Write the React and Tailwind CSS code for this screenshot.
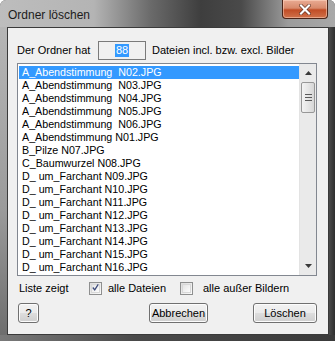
import React from 'react'

const files = [
  'A_Abendstimmung  N02.JPG',
  'A_Abendstimmung  N03.JPG',
  'A_Abendstimmung  N04.JPG',
  'A_Abendstimmung  N05.JPG',
  'A_Abendstimmung  N06.JPG',
  'A_Abendstimmung N01.JPG',
  'B_Pilze N07.JPG',
  'C_Baumwurzel N08.JPG',
  'D_ um_Farchant N09.JPG',
  'D_ um_Farchant N10.JPG',
  'D_ um_Farchant N11.JPG',
  'D_ um_Farchant N12.JPG',
  'D_ um_Farchant N13.JPG',
  'D_ um_Farchant N14.JPG',
  'D_ um_Farchant N15.JPG',
  'D_ um_Farchant N16.JPG',
]

const Checkbox = ({ checked }) => (
  <span className="w-[13px] h-[13px] border border-[#8e8f8f] bg-[linear-gradient(135deg,#dcdcdc,#fbfbfb)] flex items-center justify-center">
    <span className="w-[9px] h-[9px] border border-[#d8d8d8] bg-[linear-gradient(135deg,#e4e4e4,#fdfdfd)] flex items-center justify-center">
      {checked && (
        <svg width="9" height="9" viewBox="0 0 9 9" className="-mt-[1px]">
          <path d="M1 4.5 L3.5 7.5 L8 0.5" fill="none" stroke="#3c4a7a" strokeWidth="1.6" />
        </svg>
      )}
    </span>
  </span>
)

const Button = ({ children, className = '' }) => (
  <button className={`h-[20px] rounded-[3px] border border-[#707070] bg-[linear-gradient(#f2f2f2_0%,#ebebeb_48%,#dddddd_52%,#cfcfcf_100%)] shadow-[inset_0_0_0_1px_#fcfcfc] text-[11px] text-black flex items-center justify-center ${className}`}>
    {children}
  </button>
)

export default function App() {
  return (
    <div className="w-[335px] h-[341px] flex flex-col rounded-t-[6px] overflow-hidden bg-[#5a5a5a] font-['Liberation_Sans',Arial,sans-serif]">
      {/* TITLE BAR */}
      <div className="h-[27px] flex items-start justify-between pl-[8px] pr-[7px] bg-[linear-gradient(90deg,#bdbdbd_0%,#b4b4b4_28%,#6a6a6a_45%,#3e3e3e_60%,#4a4a4a_72%,#9c9c9c_86%,#a8a8a8_100%)]">
        <span className="mt-[6px] text-[12px] text-[#1c1c1c]">Ordner löschen</span>
        <div className="w-[46px] h-[19px] rounded-b-[4px] border border-t-0 border-[#4a2418] bg-[linear-gradient(#e9ab93_0%,#d88a6c_45%,#c14d26_55%,#d0714a_100%)] shadow-[inset_0_0_0_1px_rgba(255,220,200,0.5)] flex items-center justify-center">
          <svg width="12" height="11" viewBox="0 0 12 11">
            <path d="M2 1.5 L10 9.5 M10 1.5 L2 9.5" stroke="#5a2a1a" strokeWidth="3.4" strokeLinecap="square" />
            <path d="M2 1.5 L10 9.5 M10 1.5 L2 9.5" stroke="#ffffff" strokeWidth="2.2" strokeLinecap="square" />
          </svg>
        </div>
      </div>

      <div className="flex-1 flex">
        <div className="w-[7px] bg-[linear-gradient(#b6b6b6,#9a9a9a_60%,#6e6e6e)]" />

        {/* CLIENT AREA */}
        <div className="flex-1 flex flex-col border border-[#3a3a3a] bg-[#f0f0f0] pl-[9px] pr-[11px] pt-[13px] text-[11px] text-black">
          <div className="flex items-center h-[19px]">
            <span className="w-[81px]">Der Ordner hat</span>
            <span className="w-[48px] h-[19px] border border-[#7a7a7a] bg-[#f0f0f0] flex items-center justify-center">
              <span className="bg-[#3399ff] text-white px-[1px] leading-[13px]">88</span>
            </span>
            <span className="ml-[6px]">Dateien incl. bzw. excl. Bilder</span>
          </div>

          {/* FILE LIST */}
          <div className="mt-[3px] h-[213px] border border-[#828790] bg-white flex">
            <div className="flex-1 pt-[2px] pl-[1px]">
              {files.map((name, i) => (
                <div
                  key={i}
                  className={`h-[13px] leading-[13px] pl-[3px] text-[10.7px] whitespace-pre ${i === 0 ? 'bg-[#3399ff] text-white' : 'text-black'}`}
                >
                  {name}
                </div>
              ))}
            </div>
            <div className="w-[17px] bg-[#eaeaea] border-l border-[#e3e3e3] flex flex-col">
              <div className="h-[18px] flex items-center justify-center">
                <svg width="7" height="4" viewBox="0 0 7 4"><path d="M0 4 L3.5 0 L7 4 Z" fill="#3a3a3a" /></svg>
              </div>
              <div className="mx-[1px] h-[31px] rounded-[2px] border border-[#979797] bg-[linear-gradient(90deg,#f3f3f3,#e6e6e6_50%,#d6d6d6)] flex flex-col items-center justify-center gap-[2px]">
                <span className="w-[7px] h-[1px] bg-[#5a5a5a]" />
                <span className="w-[7px] h-[1px] bg-[#5a5a5a]" />
                <span className="w-[7px] h-[1px] bg-[#5a5a5a]" />
              </div>
              <div className="flex-1" />
              <div className="h-[18px] flex items-center justify-center">
                <svg width="7" height="4" viewBox="0 0 7 4"><path d="M0 0 L3.5 4 L7 0 Z" fill="#3a3a3a" /></svg>
              </div>
            </div>
          </div>

          {/* FILTER ROW */}
          <div className="mt-[5px] flex items-center h-[14px] pl-[2px]">
            <span className="w-[70px]">Liste zeigt</span>
            <Checkbox checked />
            <span className="ml-[6px] w-[72px]">alle Dateien</span>
            <Checkbox />
            <span className="ml-[10px]">alle außer Bildern</span>
          </div>

          {/* BUTTONS */}
          <div className="mt-[8px] flex items-center">
            <Button className="w-[21px] ml-[1px]">?</Button>
            <Button className="w-[59px] ml-[110px]">Abbrechen</Button>
            <Button className="w-[64px] ml-auto">Löschen</Button>
          </div>
        </div>

        <div className="w-[6px] bg-[linear-gradient(90deg,#4a4a4a,#2e2e2e)]" />
      </div>
      <div className="h-[6px] bg-[linear-gradient(90deg,#7a7a7a,#4a4a4a_40%,#3a3a3a)]" />
    </div>
  )
}
